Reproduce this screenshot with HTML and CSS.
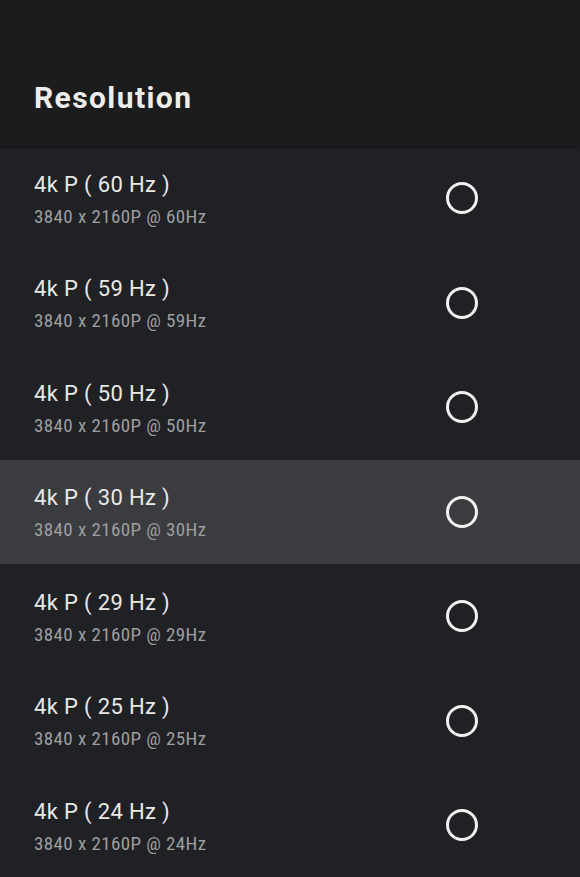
FILE: index.html
```html
<!DOCTYPE html>
<html lang="en">
<head>
    <meta charset="UTF-8">
    <title>Resolution</title>
    <link rel="stylesheet" href="styles.css">
</head>
<body>
    <header class="panel-header">
        <h1>Resolution</h1>
    </header>
    <ul class="option-list">
        <li class="option">
            <div class="option-text">
                <span class="option-title">4k P ( 60 Hz )</span>
                <span class="option-sub">3840 x 2160P @ 60Hz</span>
            </div>
            <svg class="radio" viewBox="0 0 32 32"><circle cx="16" cy="16" r="14.5"/></svg>
        </li>
        <li class="option">
            <div class="option-text">
                <span class="option-title">4k P ( 59 Hz )</span>
                <span class="option-sub">3840 x 2160P @ 59Hz</span>
            </div>
            <svg class="radio" viewBox="0 0 32 32"><circle cx="16" cy="16" r="14.5"/></svg>
        </li>
        <li class="option">
            <div class="option-text">
                <span class="option-title">4k P ( 50 Hz )</span>
                <span class="option-sub">3840 x 2160P @ 50Hz</span>
            </div>
            <svg class="radio" viewBox="0 0 32 32"><circle cx="16" cy="16" r="14.5"/></svg>
        </li>
        <li class="option focused">
            <div class="option-text">
                <span class="option-title">4k P ( 30 Hz )</span>
                <span class="option-sub">3840 x 2160P @ 30Hz</span>
            </div>
            <svg class="radio" viewBox="0 0 32 32"><circle cx="16" cy="16" r="14.5"/></svg>
        </li>
        <li class="option">
            <div class="option-text">
                <span class="option-title">4k P ( 29 Hz )</span>
                <span class="option-sub">3840 x 2160P @ 29Hz</span>
            </div>
            <svg class="radio" viewBox="0 0 32 32"><circle cx="16" cy="16" r="14.5"/></svg>
        </li>
        <li class="option">
            <div class="option-text">
                <span class="option-title">4k P ( 25 Hz )</span>
                <span class="option-sub">3840 x 2160P @ 25Hz</span>
            </div>
            <svg class="radio" viewBox="0 0 32 32"><circle cx="16" cy="16" r="14.5"/></svg>
        </li>
        <li class="option">
            <div class="option-text">
                <span class="option-title">4k P ( 24 Hz )</span>
                <span class="option-sub">3840 x 2160P @ 24Hz</span>
            </div>
            <svg class="radio" viewBox="0 0 32 32"><circle cx="16" cy="16" r="14.5"/></svg>
        </li>
    </ul>
</body>
</html>
```

FILE: styles.css
```css
body {
    font-family: Roboto, "Noto Sans", sans-serif;
    background-color: #202124;
    margin: 0;
    height: 877px;
    overflow: hidden;
}

.panel-header {
    height: 146px;
    background-color: #1b1c1e;
    box-shadow: 0 1px 3px rgba(0, 0, 0, 0.5);
    padding-left: 34px;
    box-sizing: border-box;
    display: flex;
    align-items: flex-end;
    position: relative;
}

.panel-header h1 {
    margin: 0 0 30px;
    font-size: 30px;
    font-weight: 700;
    line-height: 36px;
    letter-spacing: 1.4px;
    color: #ededed;
}

.option-list {
    list-style: none;
    margin: 0;
    padding: 0;
}

.option {
    height: 104.5px;
    box-sizing: border-box;
    padding: 0 102px 0 34px;
    display: flex;
    align-items: center;
    justify-content: space-between;
}

.option.focused {
    background-color: #3b3c3f;
}

.option-text {
    display: flex;
    flex-direction: column;
    margin-top: 4px;
}

.option-title {
    font-size: 22px;
    line-height: 26px;
    letter-spacing: 0.35px;
    color: #e8e8e8;
}

.option-sub {
    margin-top: 7px;
    font-family: "Roboto Condensed", Roboto, sans-serif;
    font-stretch: 80%;
    font-size: 19px;
    line-height: 24px;
    letter-spacing: 0.4px;
    color: #9d9ea0;
}

.radio {
    width: 32px;
    height: 32px;
    fill: none;
    stroke: #f2f2f2;
    stroke-width: 3;
}
```
